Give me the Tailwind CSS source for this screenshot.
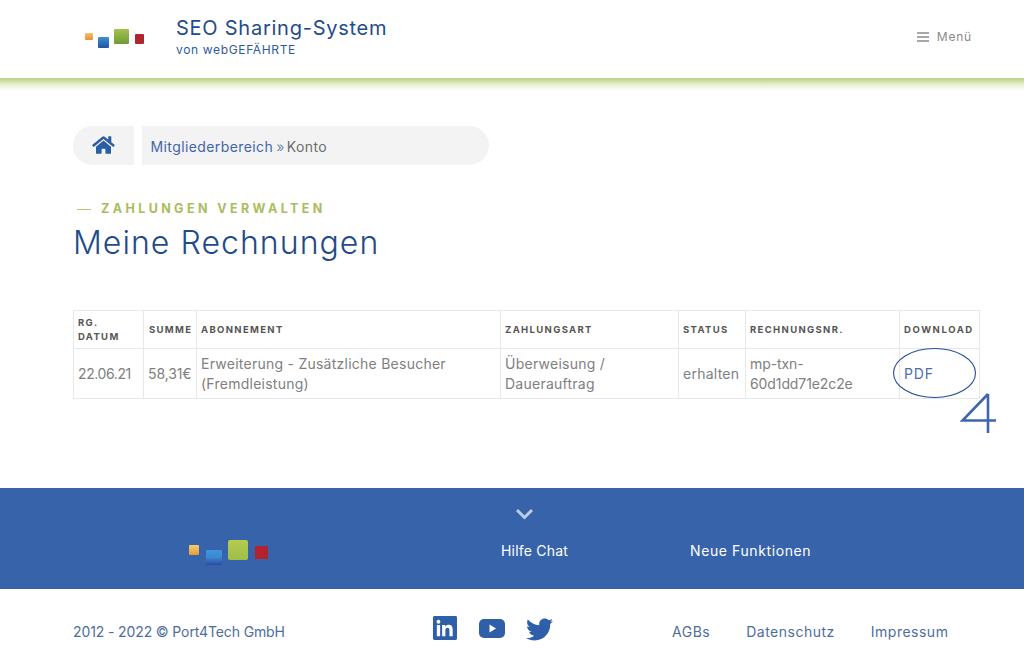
<!DOCTYPE html>
<html lang="de">
<head>
  <meta charset="UTF-8" />
  <meta name="viewport" content="width=device-width, initial-scale=1.0" />
  <title>Meine Rechnungen</title>
  <script src="https://cdn.jsdelivr.net/npm/@tailwindcss/browser@4"></script>
</head>
<body class="bg-white font-['Inter',sans-serif] text-[#666] h-[660px] overflow-hidden">

  <!-- header -->
  <header class="h-[78px] flex items-center justify-between pl-[85px] pr-[52px]">
    <div class="flex items-center">
      <div class="w-[60px] h-[20px] relative">
        <span class="absolute left-0 top-[4px] w-[8px] h-[7px] rounded-[1px] bg-gradient-to-b from-[#f3c266] to-[#e2932f]"></span>
        <span class="absolute left-[13px] top-[8px] w-[11px] h-[11px] rounded-[1px] bg-gradient-to-b from-[#3f8fd0] to-[#20569f]"></span>
        <span class="absolute left-[29px] top-0 w-[15px] h-[15px] rounded-[1px] bg-gradient-to-b from-[#a5c04f] to-[#6f9c35]"></span>
        <span class="absolute left-[50px] top-[5px] w-[9px] h-[10px] rounded-[1px] bg-[#b0262f]"></span>
      </div>
      <div class="ml-[31px] mt-[-6px]">
        <div class="text-[20px] leading-[26px] text-[#1f4b8c] tracking-[0.75px]">SEO Sharing-System</div>
        <div class="mt-[1px] text-[12px] leading-[15px] text-[#2f5a9a] tracking-[0.65px]">von webGEFÄHRTE</div>
      </div>
    </div>
    <div class="flex items-center gap-[8px] mt-[-4px] text-[12px] text-[#8a8a8a] tracking-[0.8px]">
      <svg width="12" height="10" viewBox="0 0 12 10"><path d="M0 1h12M0 5h12M0 9h12" stroke="#8a8a8a" stroke-width="1.3"/></svg>
      <span>Menü</span>
    </div>
  </header>
  <div class="h-[13px] bg-gradient-to-b from-[#b9cf80] via-[#e6efd0] to-white"></div>

  <main class="px-[73px] pt-[35px]">
    <!-- breadcrumb -->
    <nav class="flex h-[39px] w-[416px] gap-[8px]">
      <a class="w-[61px] bg-[#f3f3f3] rounded-l-[20px] flex items-center justify-center">
        <svg width="23" height="20" viewBox="0 0 576 512" class="mt-[-2px]"><path fill="#2c5ea6" d="M280.4 148.3 96 300.1V464a16 16 0 0 0 16 16l112.1-.3a16 16 0 0 0 15.9-16V368a16 16 0 0 1 16-16h64a16 16 0 0 1 16 16v95.6a16 16 0 0 0 16 16.1L464 480a16 16 0 0 0 16-16V300L295.7 148.3a12.2 12.2 0 0 0-15.3 0zM571.6 251.500 488 182.600V44.100a12 12 0 0 0-12-12h-56a12 12 0 0 0-12 12v72.600L318.500 43a48 48 0 0 0-61 0L4.300 251.500a12 12 0 0 0-1.600 16.900l25.500 31A12 12 0 0 0 45.200 301l235.200-193.700a12.200 12.200 0 0 1 15.300 0L530.900 301a12 12 0 0 0 16.900-1.600l25.500-31a12 12 0 0 0-1.800-16.900z"/></svg>
      </a>
      <div class="flex-1 bg-[#f3f3f3] rounded-r-[20px] flex items-center pl-[8.500px] pt-[2px] text-[14px] tracking-[0.4px] text-[#6d6d6d]">
        <a class="text-[#3f66ab]">Mitgliederbereich</a><span class="ml-[3px] text-[#7a8cae]">»</span><span class="ml-[2px]">Konto</span>
      </div>
    </nav>

    <!-- heading -->
    <div class="mt-[35px] flex items-center pl-[4px] h-[18px] text-[12.5px] font-bold tracking-[3.4px] text-[#a9bd5c]">
      <span class="w-[14px] h-[1px] bg-[#b5c777] mr-[10px]"></span>ZAHLUNGEN VERWALTEN
    </div>
    <h1 class="mt-[5px] text-[32px] leading-[40px] font-light text-[#1f4b8c] tracking-[1.05px]">Meine Rechnungen</h1>

    <!-- invoices -->
    <div class="relative mt-[47px] w-[907px]">
      <table class="table-fixed w-[906px] border-collapse text-[14px] leading-[20px] tracking-[0.25px] text-[#808080]">
        <colgroup>
          <col class="w-[70px]" /><col class="w-[53px]" /><col class="w-[304px]" /><col class="w-[178px]" /><col class="w-[67px]" /><col class="w-[154px]" /><col class="w-[80px]" />
        </colgroup>
        <thead>
          <tr class="h-[38px] text-[9.5px] leading-[14px] font-bold tracking-[1.35px] text-[#555] text-left">
            <th class="border border-[#e8e8e8] pl-[4px] font-bold">RG.<br />DATUM</th>
            <th class="border border-[#e8e8e8] pl-[5px] font-bold">SUMME</th>
            <th class="border border-[#e8e8e8] pl-[4px] font-bold">ABONNEMENT</th>
            <th class="border border-[#e8e8e8] pl-[4px] font-bold">ZAHLUNGSART</th>
            <th class="border border-[#e8e8e8] pl-[4px] font-bold">STATUS</th>
            <th class="border border-[#e8e8e8] pl-[4px] font-bold">RECHNUNGSNR.</th>
            <th class="border border-[#e8e8e8] pl-[4px] font-bold whitespace-nowrap tracking-[1.6px]">DOWNLOAD</th>
          </tr>
        </thead>
        <tbody>
          <tr class="h-[50px]">
            <td class="border border-[#e8e8e8] pl-[4px] tracking-[-0.4px]">22.06.21</td>
            <td class="border border-[#e8e8e8] pl-[4px] whitespace-nowrap tracking-[-0.1px]">58,31€</td>
            <td class="border border-[#e8e8e8] pl-[4px]">Erweiterung - Zusätzliche Besucher (Fremdleistung)</td>
            <td class="border border-[#e8e8e8] pl-[4px]">Überweisung / Dauerauftrag</td>
            <td class="border border-[#e8e8e8] pl-[4px]">erhalten</td>
            <td class="border border-[#e8e8e8] pl-[4px] tracking-[-0.1px]">mp-txn-<br />60d1dd71e2c2e</td>
            <td class="border border-[#e8e8e8] pl-[4px] text-[#4a6fb0] tracking-[0.8px]">PDF</td>
          </tr>
        </tbody>
      </table>
      <!-- hand drawn annotation -->
      <svg class="absolute left-[818px] top-[37px]" width="90" height="56" viewBox="0 0 90 56" fill="none">
        <ellipse cx="43.500" cy="26" rx="41" ry="24.500" stroke="#274f96" stroke-width="1.100"/>
      </svg>
      <svg class="absolute left-[887px] top-[81px]" width="38" height="44" viewBox="0 0 38 44" fill="none">
        <path d="M28 3 2.500 29.500H36M28 3v39" stroke="#3f66ab" stroke-width="2.600"/>
      </svg>
    </div>
  </main>

  <!-- footer -->
  <section class="mt-[89px] h-[101px] bg-[#3763ab] relative flex">
    <div class="w-[189px]"></div>
    <div class="w-[81px] h-[24px] mt-[52px] relative">
      <span class="absolute left-0 top-[5px] w-[10px] h-[10px] rounded-[1px] bg-gradient-to-b from-[#f2d16b] to-[#e89a35]"></span>
      <span class="absolute left-[17px] top-[10px] w-[16px] h-[15px] rounded-[1px] bg-gradient-to-b from-[#3f96dc] via-[#3c87d0] to-[#2d48a5]"></span>
      <span class="absolute left-[39px] top-0 w-[20px] h-[20px] rounded-[2px] bg-gradient-to-b from-[#b7cb4f] to-[#9dbd4a]"></span>
      <span class="absolute left-[66px] top-[6px] w-[13px] h-[13px] bg-[#b3222f]"></span>
    </div>
    <div class="w-[231px]"></div>
    <div class="flex flex-col items-start text-white text-[14px] tracking-[0.2px]">
      <svg class="ml-[14px] mt-[20px]" width="19" height="12" viewBox="0 0 19 12" fill="none"><path d="M2 2l7.500 7.500L17 2" stroke="#bccde9" stroke-width="3"/></svg>
      <a class="mt-[21px] leading-[20px]">Hilfe Chat</a>
    </div>
    <a class="ml-[122px] mt-[53px] leading-[20px] h-[20px] text-white text-[14px] tracking-[0.6px]">Neue Funktionen</a>
  </section>

  <footer class="h-[71px] flex text-[14px] tracking-[-0.12px] text-[#4e6d9f] pl-[73px]">
    <div class="w-[360px] pt-[33px] leading-[20px]">2012 - 2022 © Port4Tech GmbH</div>
    <div class="flex items-start pt-[27px]">
      <svg width="24" height="24" viewBox="0 0 25 25"><rect width="25" height="25" rx="1.500" fill="#2f5fa8"/><path fill="#fff" d="M4 9.500h3.400V21H4zM5.700 4a2 2 0 1 1 0 4 2 2 0 0 1 0-4zM9.500 9.500h3.200v1.600c.6-1 1.800-1.900 3.500-1.900 3.500 0 4.300 2.200 4.300 5.200V21h-3.400v-5.800c0-1.500-.2-3-1.900-3s-2.300 1.400-2.300 3V21H9.500z"/></svg>
      <svg class="ml-[22px] mt-[3px]" width="26" height="19" viewBox="0 0 26 19"><rect width="26" height="19" rx="5" fill="#2f5fa8"/><path fill="#fff" d="M10.500 5.500v8l6.500-4z"/></svg>
      <svg class="ml-[21px]" width="27" height="27" viewBox="0 0 512 512"><path fill="#2f5fa8" d="M459.400 151.700c.3 4.500.3 9.100.3 13.600 0 138.700-105.600 298.600-298.600 298.600-59.500 0-114.700-17.200-161.100-47.100 8.400 1 16.600 1.300 25.300 1.300 49.100 0 94.200-16.600 130.300-44.800-46.100-1-84.800-31.200-98.100-72.800 6.500 1 13 1.600 19.800 1.600 9.400 0 18.800-1.300 27.600-3.600-48.100-9.700-84.100-52-84.100-103v-1.300c14 7.800 30.200 12.700 47.400 13.300-28.300-18.800-46.800-51-46.800-87.400 0-19.500 5.200-37.400 14.300-53 51.700 63.700 129.300 105.300 216.400 109.800-1.600-7.800-2.600-15.900-2.600-24 0-57.800 46.800-104.900 104.900-104.900 30.200 0 57.500 12.700 76.700 33.100 23.700-4.500 46.500-13.300 66.600-25.300-7.800 24-24.400 44.500-46.100 57.200 21.100-2.300 41.600-8.100 60.400-16.200-14.300 20.800-32.200 39.300-52.600 54.300z"/></svg>
    </div>
    <div class="ml-[119px] pt-[33px] leading-[20px] flex gap-[36px] tracking-[0.5px]">
      <a>AGBs</a><a>Datenschutz</a><a>Impressum</a>
    </div>
  </footer>
</body>
</html>
